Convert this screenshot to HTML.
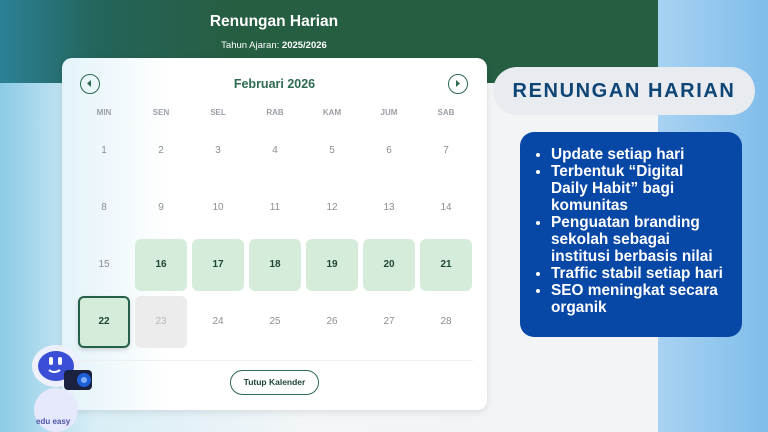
<!DOCTYPE html>
<html><head><meta charset="utf-8"><style>
*{margin:0;padding:0;box-sizing:border-box}
body{width:768px;height:432px;overflow:hidden;position:relative;font-family:"Liberation Sans",sans-serif;background:linear-gradient(90deg,#8ccbe6 0%,#d8eef6 12%,#f3f6f8 40%,#f2f4f6 66%,#f2f4f6 100%)}
.rightbg{position:absolute;left:658px;top:0;width:110px;height:432px;background:linear-gradient(90deg,#a9d2f2,#7fbdea)}
.hdr{position:absolute;left:0;top:0;width:658px;height:83px;background:linear-gradient(90deg,#2b8196 0%,#24645a 15%,#265e42 35%,#265e42 100%)}
.t1{position:absolute;left:0;width:548px;top:13px;text-align:center;color:#fff;font-weight:bold;font-size:15.5px}
.t2{position:absolute;left:0;width:548px;top:40px;text-align:center;color:#fff;font-size:9.5px}
.card{position:absolute;left:62px;top:58px;width:425px;height:352px;background:linear-gradient(90deg,#e3f3f9 0%,#fff 25%);border-radius:10px;box-shadow:0 2px 8px rgba(0,0,0,.1)}
.nav{position:absolute;width:20px;height:20px;border:1.5px solid #2d6a4f;border-radius:50%;top:16px}
.month{position:absolute;top:19px;left:0;width:425px;text-align:center;color:#2d6a4f;font-weight:bold;font-size:12.5px}
.dh{position:absolute;top:50px;width:52px;text-align:center;font-size:8px;font-weight:bold;color:#9aa0a6}
.c{position:absolute;width:52px;height:52px;line-height:52px;text-align:center;font-size:10px;color:#8a8f94;border-radius:6px}
.g{background:#d5ecdb;color:#1f4634;font-weight:bold}
.sel{background:#d5ecdb;color:#1f4634;font-weight:bold;border:2px solid #24604a;line-height:48px;box-shadow:0 2px 4px rgba(0,0,0,.15)}
.gr{background:#ececec;color:#b8b8b8}
.div{position:absolute;left:14px;right:14px;top:302px;border-top:1px solid #eef0f0}
.btn{position:absolute;left:168px;top:312px;width:89px;height:25px;border:1.5px solid #2d6a4f;border-radius:13px;text-align:center;line-height:22px;font-size:8.5px;font-weight:bold;color:#1f4634}
.pill{position:absolute;left:493px;top:67px;width:262px;height:48px;background:#e8ebf0;border-radius:24px;text-align:center;line-height:48px;color:#0e4577;font-weight:900;font-size:20px;letter-spacing:1.6px}
.box{position:absolute;left:520px;top:132px;width:222px;height:205px;background:#0747a6;border-radius:14px;color:#fff;font-weight:bold;font-size:15.4px;line-height:17px;padding:14px 0 0 31px;white-space:nowrap}
.box ul{list-style:disc}
</style></head><body>
<div class="rightbg"></div>
<div class="hdr"><div class="t1">Renungan Harian</div><div class="t2">Tahun Ajaran: <b>2025/2026</b></div></div>
<div class="card">
<div class="nav" style="left:18px"><svg width="17" height="17" viewBox="0 0 17 17"><path d="M10 5L6 8.5 10 12Z" fill="#2d6a4f"/></svg></div>
<div class="nav" style="left:386px"><svg width="17" height="17" viewBox="0 0 17 17"><path d="M7 5L11 8.5 7 12Z" fill="#2d6a4f"/></svg></div>
<div class="month">Februari 2026</div>
<div class="dh" style="left:16px">MIN</div><div class="dh" style="left:73px">SEN</div><div class="dh" style="left:130px">SEL</div><div class="dh" style="left:187px">RAB</div><div class="dh" style="left:244px">KAM</div><div class="dh" style="left:301px">JUM</div><div class="dh" style="left:358px">SAB</div>
<div class="c" style="left:16px;top:67px">1</div><div class="c" style="left:73px;top:67px">2</div><div class="c" style="left:130px;top:67px">3</div><div class="c" style="left:187px;top:67px">4</div><div class="c" style="left:244px;top:67px">5</div><div class="c" style="left:301px;top:67px">6</div><div class="c" style="left:358px;top:67px">7</div>
<div class="c" style="left:16px;top:124px">8</div><div class="c" style="left:73px;top:124px">9</div><div class="c" style="left:130px;top:124px">10</div><div class="c" style="left:187px;top:124px">11</div><div class="c" style="left:244px;top:124px">12</div><div class="c" style="left:301px;top:124px">13</div><div class="c" style="left:358px;top:124px">14</div>
<div class="c" style="left:16px;top:181px">15</div><div class="c g" style="left:73px;top:181px">16</div><div class="c g" style="left:130px;top:181px">17</div><div class="c g" style="left:187px;top:181px">18</div><div class="c g" style="left:244px;top:181px">19</div><div class="c g" style="left:301px;top:181px">20</div><div class="c g" style="left:358px;top:181px">21</div>
<div class="c sel" style="left:16px;top:238px">22</div><div class="c gr" style="left:73px;top:238px">23</div><div class="c" style="left:130px;top:238px">24</div><div class="c" style="left:187px;top:238px">25</div><div class="c" style="left:244px;top:238px">26</div><div class="c" style="left:301px;top:238px">27</div><div class="c" style="left:358px;top:238px">28</div>
<div class="div"></div>
<div class="btn">Tutup Kalender</div>
</div>
<svg style="position:absolute;left:20px;top:338px" width="80" height="94" viewBox="0 0 80 94">
<ellipse cx="36" cy="72" rx="22" ry="22" fill="#e6e8fb"/>
<ellipse cx="36" cy="28" rx="24" ry="21" fill="#eef0fb"/>
<ellipse cx="36" cy="28" rx="18" ry="15" fill="#3b4fd6"/>
<rect x="29" y="19" width="4" height="8" rx="2" fill="#fff"/><rect x="38" y="19" width="4" height="8" rx="2" fill="#fff"/>
<path d="M29 32Q34 36 40 32" stroke="#fff" stroke-width="2" fill="none"/>
<rect x="44" y="32" width="28" height="20" rx="4" fill="#1a2240"/>
<circle cx="64" cy="42" r="7" fill="#1e5fd8"/><circle cx="64" cy="42" r="3" fill="#7fb0ff"/>
<text x="16" y="86" font-size="8" font-weight="bold" fill="#4a54a8" font-family="Liberation Sans">edu easy</text>
</svg>
<div class="pill">RENUNGAN HARIAN</div>
<div class="box"><ul>
<li>Update setiap hari</li>
<li>Terbentuk “Digital<br>Daily Habit” bagi<br>komunitas</li>
<li>Penguatan branding<br>sekolah sebagai<br>institusi berbasis nilai</li>
<li>Traffic stabil setiap hari</li>
<li>SEO meningkat secara<br>organik</li>
</ul></div>
</body></html>
